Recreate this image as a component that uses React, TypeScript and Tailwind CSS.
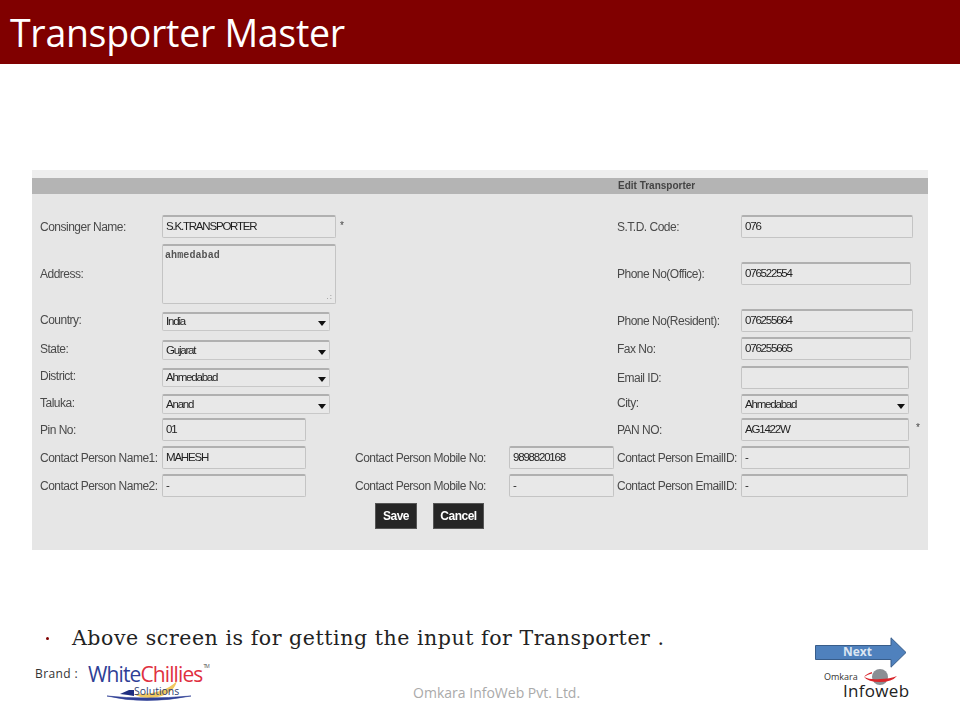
import React from 'react'

const sans = "font-['Liberation_Sans',Arial,sans-serif]"

function Label({ text, className }: { text: string; className: string }) {
  return <span className={`${className} shrink-0 whitespace-nowrap text-[12px] leading-none tracking-[-0.5px] text-[#4a4a4a]`}>{text}</span>
}

function Input({ value, className }: { value?: string; className: string }) {
  return (
    <div className={`${className} flex items-center rounded-[2px] border border-[#c4c4c4] border-t-2 border-t-[#b0b0b0] bg-[#e8e8e8] pl-[3px] text-[11.5px] tracking-[-1.2px] text-[#222]`}>
      {value}
    </div>
  )
}

function Select({ value, className }: { value: string; className: string }) {
  return (
    <div className={`${className} flex items-center justify-between rounded-[2px] border border-[#c8c8c8] border-t-2 border-t-[#b0b0b0] bg-[#e8e8e8] pl-[3px] pr-[3px] text-[11.5px] tracking-[-1.2px] text-[#222]`}>
      {value}
      <span className="mt-[3px] h-0 w-0 border-x-[4px] border-t-[5px] border-x-transparent border-t-[#111]" />
    </div>
  )
}

function WhiteChilliesLogo() {
  return (
    <div className="flex w-[118px] flex-col items-start">
      <div className="flex items-start text-[21px] leading-none tracking-[-0.9px] font-['Open_Sans',sans-serif]">
        <span className="text-[#2f3f96]">White</span>
        <span className="text-[#e0303f]">Chillies</span>
        <span className="ml-[1px] text-[5px] text-[#555]">TM</span>
      </div>
      <svg width="90" height="20" viewBox="0 0 90 20" className="ml-[17px] overflow-visible">
        <path d="M29 9 Q58 10 72 -4 Q68 11 46 13 Q34 13 29 9 Z" fill="#f0c860" />
        <path d="M15 9 L24 5 L29 5 L29 11 L23 10 Z" fill="#1f2f80" />
        <text x="29" y="10" fontSize="10.5" fill="#2f3f70" fontFamily="Open Sans">Solutions</text>
        <path d="M2 11 Q40 20 86 11 Q40 15 2 11 Z" fill="#2f3f96" stroke="#2f3f96" strokeWidth="0.6" />
      </svg>
    </div>
  )
}

function InfowebLogo() {
  return (
    <div className="relative mt-[3px] h-[33px] w-[92px] font-['Open_Sans',sans-serif]">
      <span className="absolute left-[9px] top-px text-[9px] leading-none text-[#333]">Omkara</span>
      <svg width="38" height="18" viewBox="0 0 38 18" className="absolute left-[46px] -top-[3px]">
        <circle cx="19" cy="9" r="8" fill="#8a8f94" />
        <path d="M3 9 Q7 14 19 14 Q31 14 36 8 Q29 11 19 11 Q9 12 3 9 Z" fill="#d9262c" />
        <path d="M3 9 Q5 6 11 4 L11 5.5 Q7 6 3 9 Z" fill="#d9262c" />
      </svg>
      <span className="absolute left-[28px] top-[11px] text-[17px] leading-none tracking-[0.3px] text-[#222]">Infoweb</span>
    </div>
  )
}

export default function App() {
  return (
    <div className="h-[720px] w-[960px] overflow-hidden bg-white font-['Open_Sans',sans-serif]">
      <header className="flex h-16 items-center bg-[#800000] pl-[10px]">
        <h1 className="mt-[2px] text-[37.5px] leading-none tracking-[-0.3px] text-white">Transporter Master</h1>
      </header>

      <section className={`${sans} mx-8 mt-[106px] h-[380px] bg-[#e6e6e6] blur-[0.3px]`}>
        <div className="h-2 bg-[#eeeeee]" />
        <div className="h-4 bg-[#b4b4b4] pl-[586px] text-[10px] font-bold leading-4 text-[#444]">Edit Transporter</div>

        <div className="flex items-start pl-2 pt-[21px]">
          <div className="flex w-[315px] shrink-0 flex-col">
            <div className="flex h-[23px] items-center">
              <Label text="Consinger Name:" className="w-[122px]" />
              <Input value="S.K.TRANSPORTER" className="h-[23px] w-[174px]" />
              <span className="mb-[3px] ml-1 text-[10px] text-[#444]">*</span>
            </div>
            <div className="mt-[6px] flex h-[60px] items-center">
              <Label text="Address:" className="w-[122px]" />
              <div className="flex h-[60px] w-[174px] flex-col justify-between rounded-[2px] border border-[#c4c4c4] border-t-2 border-t-[#b0b0b0] bg-[#e8e8e8] px-[2px] pb-[2px] pt-[5px] font-['Liberation_Mono',monospace] text-[10px] font-bold leading-none tracking-[0.1px] text-[#555]">
                ahmedabad
                <span className="self-end pr-[1px] text-[7px] font-normal leading-none tracking-[-1px] text-[#999]">.:</span>
              </div>
            </div>
            <div className="mt-2 flex h-[19px] items-center">
              <Label text="Country:" className="-mt-[3px] w-[122px]" />
              <Select value="India" className="h-[19px] w-[168px]" />
            </div>
            <div className="mt-[9px] flex h-5 items-center">
              <Label text="State:" className="-mt-[3px] w-[122px]" />
              <Select value="Gujarat" className="h-5 w-[168px]" />
            </div>
            <div className="mt-2 flex h-[19px] items-center">
              <Label text="District:" className="-mt-[3px] w-[122px]" />
              <Select value="Ahmedabad" className="h-[19px] w-[168px]" />
            </div>
            <div className="mt-[7px] flex h-5 items-center">
              <Label text="Taluka:" className="-mt-[3px] w-[122px]" />
              <Select value="Anand" className="h-5 w-[168px]" />
            </div>
            <div className="mt-1 flex h-[23px] items-center">
              <Label text="Pin No:" className="w-[122px]" />
              <Input value="01" className="h-[23px] w-[144px]" />
            </div>
            <div className="mt-[5px] flex h-[23px] items-center">
              <Label text="Contact Person Name1:" className="w-[122px]" />
              <Input value="MAHESH" className="h-[23px] w-[144px]" />
            </div>
            <div className="mt-[5px] flex h-[23px] items-center">
              <Label text="Contact Person Name2:" className="w-[122px]" />
              <Input value="-" className="h-[23px] w-[144px]" />
            </div>
          </div>

          <div className="flex w-[262px] shrink-0 flex-col pt-[231px]">
            <div className="flex h-[23px] items-center">
              <Label text="Contact Person Mobile No:" className="w-[154px]" />
              <Input value="9898820168" className="h-[23px] w-[105px]" />
            </div>
            <div className="mt-[5px] flex h-[23px] items-center">
              <Label text="Contact Person Mobile No:" className="w-[154px]" />
              <Input value="-" className="h-[23px] w-[105px]" />
            </div>
            <div className="mt-[6px] flex gap-[16px] pl-5">
              <button className="h-[26px] w-[42px] border border-[#555] bg-[#262626] text-[12px] font-bold tracking-[-0.5px] text-white">Save</button>
              <button className="h-[26px] w-[51px] border border-[#555] bg-[#262626] text-[12px] font-bold tracking-[-0.5px] text-white">Cancel</button>
            </div>
          </div>

          <div className="flex flex-col">
            <div className="flex h-[23px] items-center">
              <Label text="S.T.D. Code:" className="w-[124px]" />
              <Input value="076" className="h-[23px] w-[172px]" />
            </div>
            <div className="mt-6 flex h-[23px] items-center">
              <Label text="Phone No(Office):" className="w-[124px]" />
              <Input value="076522554" className="h-[23px] w-[170px]" />
            </div>
            <div className="mt-6 flex h-[23px] items-center">
              <Label text="Phone No(Resident):" className="w-[124px]" />
              <Input value="076255664" className="h-[23px] w-[172px]" />
            </div>
            <div className="mt-[5px] flex h-[23px] items-center">
              <Label text="Fax No:" className="w-[124px]" />
              <Input value="076255665" className="h-[23px] w-[170px]" />
            </div>
            <div className="mt-[6px] flex h-[23px] items-center">
              <Label text="Email ID:" className="w-[124px]" />
              <Input className="h-[23px] w-[168px]" />
            </div>
            <div className="mt-[5px] flex h-5 items-center">
              <Label text="City:" className="-mt-[3px] w-[124px]" />
              <Select value="Ahmedabad" className="h-5 w-[168px]" />
            </div>
            <div className="mt-1 flex h-[23px] items-center">
              <Label text="PAN NO:" className="w-[124px]" />
              <Input value="AG1422W" className="h-[23px] w-[168px]" />
              <span className="mb-1 ml-[7px] text-[10px] text-[#444]">*</span>
            </div>
            <div className="mt-[5px] flex h-[23px] items-center">
              <Label text="Contact Person EmailID:" className="w-[124px]" />
              <Input value="-" className="h-[23px] w-[169px]" />
            </div>
            <div className="mt-[5px] flex h-[23px] items-center">
              <Label text="Contact Person EmailID:" className="w-[124px]" />
              <Input value="-" className="h-[23px] w-[167px] border-t-[#999]" />
            </div>
          </div>
        </div>
      </section>

      <div className="flex items-start">
        <div className="w-[815px] shrink-0 pt-[74px]">
          <div className="flex h-7 items-center pl-[46px]">
            <span className="h-[3px] w-[3px] rounded-full bg-[#800000]" />
            <span className="ml-[23px] whitespace-nowrap font-['DejaVu_Serif',serif] text-[20.5px] leading-none tracking-[0.55px] text-[#222]">Above screen is for getting the input for Transporter .</span>
          </div>
          <div className="flex items-start pl-[35px] pt-[1px]">
            <span className="pt-[13px] text-[12px] leading-4 tracking-[0.4px] text-[#333]">Brand :</span>
            <div className="ml-[10px] pt-[11px]"><WhiteChilliesLogo /></div>
            <span className="ml-[207px] pt-[32px] text-[14px] leading-4 text-[#aaa]">Omkara InfoWeb Pvt. Ltd.</span>
          </div>
        </div>
        <div className="pt-[87px]">
          <div className="relative h-[31px] w-[92px]">
            <svg width="92" height="31" viewBox="0 0 92 31" className="absolute inset-0">
              <path d="M0.5 8.5 H76 V0.8 L91 15.5 L76 30.2 V22.5 H0.5 Z" fill="#4f81bd" stroke="#385d8a" />
            </svg>
            <span className="absolute left-[28px] top-[7px] text-[12px] font-bold leading-4 text-[#dce6f2]">Next</span>
          </div>
          <InfowebLogo />
        </div>
      </div>
    </div>
  )
}
